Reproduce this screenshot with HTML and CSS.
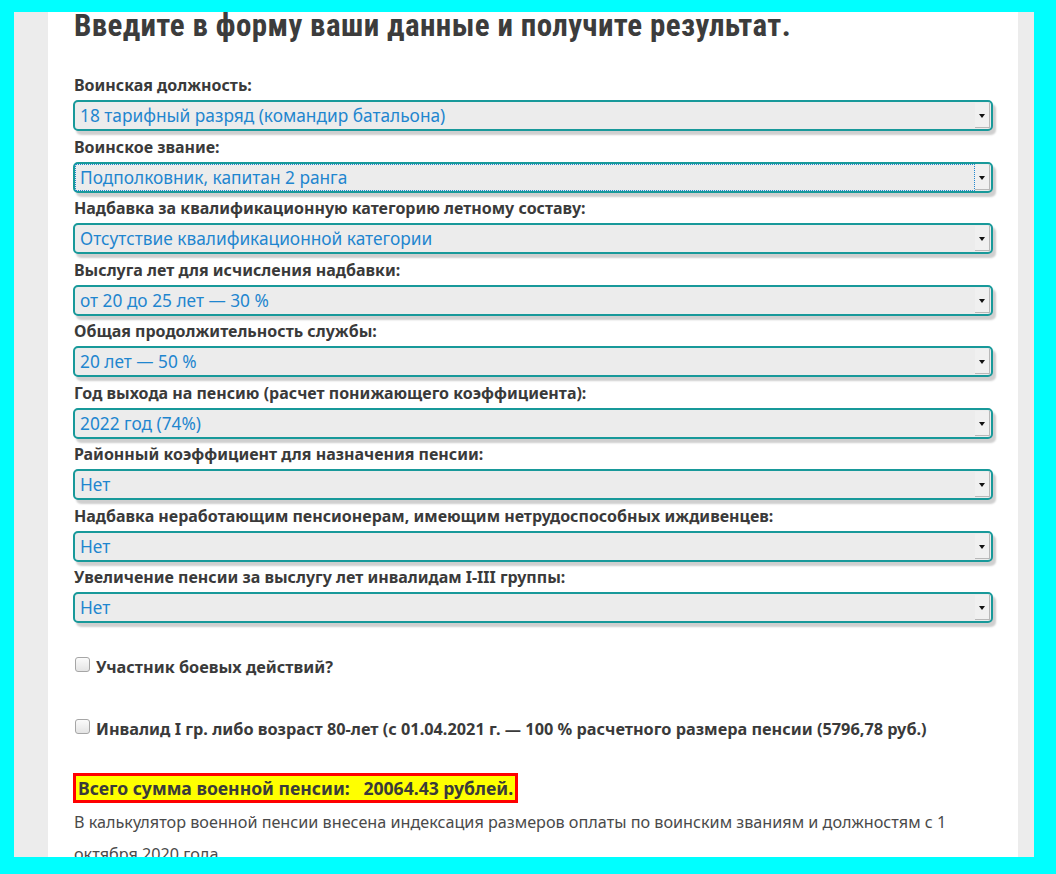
FILE: index.html
```html
<!DOCTYPE html>
<html>
<head>
    <title>Калькулятор военной пенсии</title>
    <link rel="stylesheet" href="styles.css">
</head>
<body>
    <div class="frame">
        <div class="page">
            <div class="content">
                <h1 class="title">Введите в форму ваши данные и получите результат.</h1>

                <form class="calc">
                    <div class="field">
                        <label class="field-label">Воинская должность:</label>
                        <div class="select"><span class="select-value">18 тарифный разряд (командир батальона)</span><span class="select-btn"></span></div>
                    </div>
                    <div class="field">
                        <label class="field-label">Воинское звание:</label>
                        <div class="select focused"><span class="select-value">Подполковник, капитан 2 ранга</span><span class="select-btn"></span></div>
                    </div>
                    <div class="field">
                        <label class="field-label">Надбавка за квалификационную категорию летному составу:</label>
                        <div class="select"><span class="select-value">Отсутствие квалификационной категории</span><span class="select-btn"></span></div>
                    </div>
                    <div class="field">
                        <label class="field-label">Выслуга лет для исчисления надбавки:</label>
                        <div class="select"><span class="select-value">от 20 до 25 лет — 30 %</span><span class="select-btn"></span></div>
                    </div>
                    <div class="field">
                        <label class="field-label">Общая продолжительность службы:</label>
                        <div class="select"><span class="select-value">20 лет — 50 %</span><span class="select-btn"></span></div>
                    </div>
                    <div class="field">
                        <label class="field-label">Год выхода на пенсию (расчет понижающего коэффициента):</label>
                        <div class="select"><span class="select-value">2022 год (74%)</span><span class="select-btn"></span></div>
                    </div>
                    <div class="field">
                        <label class="field-label">Районный коэффициент для назначения пенсии:</label>
                        <div class="select"><span class="select-value">Нет</span><span class="select-btn"></span></div>
                    </div>
                    <div class="field">
                        <label class="field-label">Надбавка неработающим пенсионерам, имеющим нетрудоспособных иждивенцев:</label>
                        <div class="select"><span class="select-value">Нет</span><span class="select-btn"></span></div>
                    </div>
                    <div class="field">
                        <label class="field-label">Увеличение пенсии за выслугу лет инвалидам I-III группы:</label>
                        <div class="select"><span class="select-value">Нет</span><span class="select-btn"></span></div>
                    </div>

                    <label class="check first"><span class="check-box"></span>Участник боевых действий?</label>
                    <label class="check"><span class="check-box"></span>Инвалид I гр. либо возраст 80-лет (с 01.04.2021 г. — 100 % расчетного размера пенсии (5796,78 руб.)</label>
                </form>

                <div class="result">Всего сумма военной пенсии:&nbsp;&nbsp; 20064.43 рублей.</div>
                <p class="note">В калькулятор военной пенсии внесена индексация размеров оплаты по воинским званиям и должностям с 1 октября 2020 года.</p>
            </div>
        </div>
    </div>
</body>
</html>
```

FILE: styles.css
```css
html, body {
    margin: 0;
    padding: 0;
}

body {
    background-color: #00ffff;
    font-family: "Noto Sans", "Open Sans", sans-serif;
    color: #3a3a3a;
}

.frame {
    padding: 12px 22px 0 14px;
    height: 845px;
    overflow: hidden;
}

.page {
    background-color: #ececec;
    padding: 0 16px 0 34px;
    height: 100%;
}

.content {
    background-color: #fff;
    min-height: 100%;
    padding: 0 25px 0 26px;
}

.title {
    margin: 0;
    font-family: "Liberation Sans Narrow", "Roboto Condensed", Roboto, sans-serif;
    font-weight: bold;
    font-size: 31px;
    line-height: 28px;
    height: 28px;
    color: #3c3c3c;
    letter-spacing: 0.38px;
}

.calc {
    padding-top: 35px;
}

.field {
    height: 61.5px;
}

.field-label {
    display: block;
    font-weight: bold;
    font-size: 16px;
    line-height: 20px;
    height: 20px;
    margin-bottom: 5px;
    color: #3a3a3a;
}

.select {
    display: flex;
    height: 27px;
    margin: 0 0 0 -1px;
    border: 2px solid #18999a;
    border-radius: 5px;
    background-color: #ececec;
    box-shadow: 3px 4px 2px #cfcfcf;
}

.select-value {
    flex: 1;
    padding-left: 5px;
    font-size: 17.3px;
    color: #1f86cf;
    line-height: 27px;
    height: 27px;
    white-space: nowrap;
}

.focused .select-value {
    outline: 1px dotted #1f86cf;
    outline-offset: -1px;
}

.select-btn {
    width: 15px;
    height: 25px;
    margin: 1px 1px 1px 0;
    background-color: #f0f0f0;
    box-shadow: inset -1px -1px 0 #b8b8b8;
    position: relative;
}

.select-btn::after {
    content: '';
    position: absolute;
    left: 4px;
    top: 11px;
    border-left: 3.5px solid transparent;
    border-right: 3.5px solid transparent;
    border-top: 4px solid #111;
}

.check {
    display: flex;
    align-items: center;
    font-weight: bold;
    font-size: 16.3px;
    line-height: 24px;
    height: 24px;
    margin-top: 38px;
    white-space: nowrap;
}

.check.first {
    margin-top: 26.5px;
}

.check-box {
    width: 13px;
    height: 13px;
    border: 1px solid #a6a6a6;
    border-radius: 3px;
    background: linear-gradient(#fbfbfb, #e4e4e4);
    margin: -5px 6px 0 1px;
    flex: none;
}

.result {
    display: inline-block;
    margin: 32px 0 0 -1px;
    border: 3px solid #ff0000;
    background-color: #ffff00;
    padding: 0 2px;
    font-weight: bold;
    font-size: 17.6px;
    line-height: 24px;
    color: #3a3a3a;
    white-space: nowrap;
}

.note {
    margin: 3px 0 0 0;
    font-size: 16.2px;
    line-height: 32px;
    color: #4a4a4a;
}
```
